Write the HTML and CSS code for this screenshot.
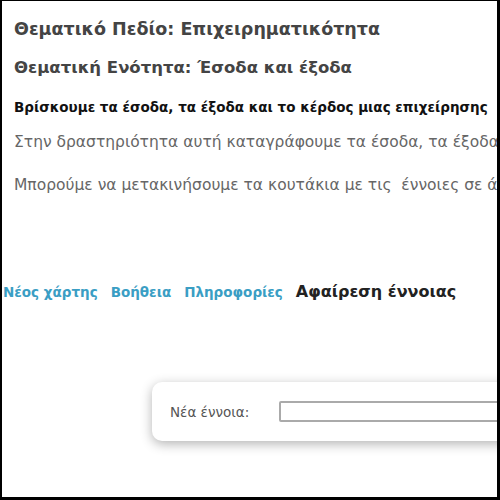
FILE: index.html
```html
<!DOCTYPE html>
<html lang="el">

<head>
  <meta charset="UTF-8" />
  <meta name="viewport" content="width=device-width, initial-scale=1.0" />
  <title>Χάρτης εννοιών</title>
  <link rel="stylesheet" href="styles.css">
</head>

<body>
  <div class="frame">
    <!-- Περιγραφή δραστηριότητας -->
    <div class="intro">
      <h1 class="field">Θεματικό Πεδίο: Επιχειρηματικότητα</h1>
      <h2 class="unit">Θεματική Ενότητα: Έσοδα και έξοδα</h2>
      <p class="goal">Βρίσκουμε τα έσοδα, τα έξοδα και το κέρδος μιας επιχείρησης</p>
      <p class="text">Στην δραστηριότητα αυτή καταγράφουμε τα έσοδα, τα έξοδα</p>
      <p class="text">Μπορούμε να μετακινήσουμε τα κουτάκια με τις &nbsp;έννοιες σε άλλη</p>
    </div>

    <!-- Μενού χάρτη -->
    <div class="menu">
      <a href="#" class="menu-link">Νέος χάρτης</a>
      <a href="#" class="menu-link">Βοήθεια</a>
      <a href="#" class="menu-link">Πληροφορίες</a>
      <span class="menu-active">Αφαίρεση έννοιας</span>
    </div>

    <!-- Προσθήκη νέας έννοιας -->
    <div class="concept-box">
      <label class="concept-label" for="concept">Νέα έννοια:</label>
      <input class="concept-input" id="concept" type="text">
    </div>
  </div>
</body>

</html>
```

FILE: styles.css
```css
body {
  margin: 0;
  background: #fff;
  font-family: "DejaVu Sans", sans-serif;
}

.frame {
  width: 500px;
  height: 500px;
  box-sizing: border-box;
  border-style: solid;
  border-color: #000;
  border-width: 1px 3px 3px 2px;
  overflow: hidden;
  background: #fff;
}

.intro {
  padding-left: 12px;
  white-space: nowrap;
}

.field,
.unit {
  font-weight: bold;
  color: #444;
  margin: 0;
}

.field {
  font-size: 17.5px;
  margin-top: 18px;
}

.unit {
  font-size: 16.5px;
  margin-top: 19px;
}

.goal {
  font-size: 13.5px;
  font-weight: bold;
  color: #111;
  margin: 22px 0 0;
}

.text {
  font-size: 15.5px;
  color: #666;
  margin: 18px 0 0;
}

.text + .text {
  margin-top: 25px;
}

.menu {
  display: flex;
  align-items: baseline;
  gap: 13px;
  padding-left: 1px;
  margin-top: 88px;
  white-space: nowrap;
}

.menu-link {
  font-size: 13.5px;
  font-weight: bold;
  color: #3a9ec4;
  text-decoration: none;
}

.menu-active {
  font-size: 16px;
  font-weight: bold;
  color: #222;
}

.concept-box {
  display: flex;
  align-items: center;
  width: 420px;
  height: 59px;
  box-sizing: border-box;
  margin: 81px 0 0 150px;
  padding-left: 18px;
  border-radius: 10px;
  background: #fff;
  box-shadow: 0 3px 12px rgba(0, 0, 0, 0.3);
}

.concept-label {
  font-size: 13.5px;
  color: #555;
  width: 109px;
}

.concept-input {
  width: 260px;
  height: 21px;
  box-sizing: border-box;
  border: 2px solid #aaa;
  border-radius: 2px;
}
```
